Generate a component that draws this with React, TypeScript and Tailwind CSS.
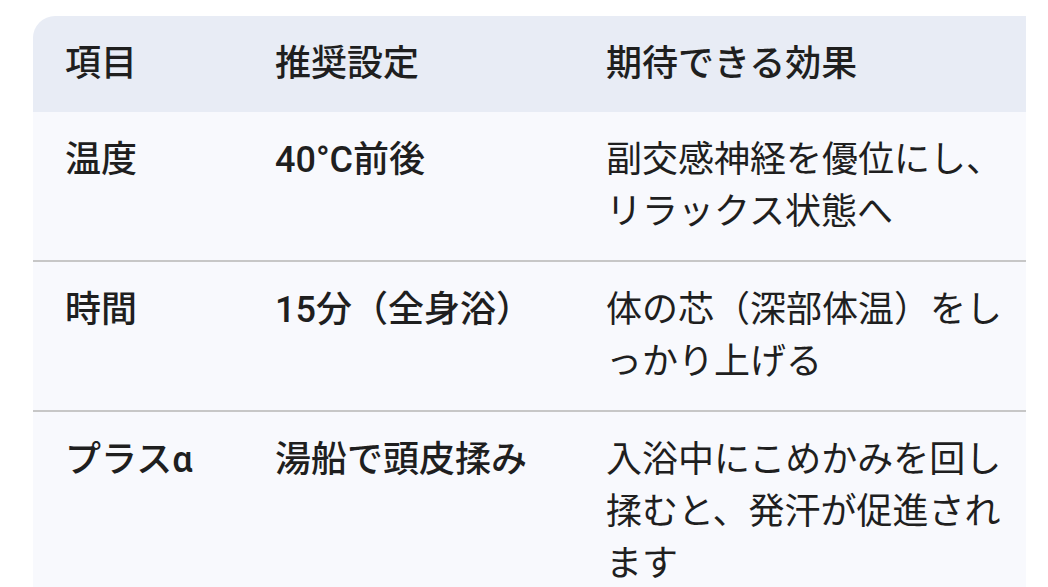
const rows = [
  {
    item: "温度",
    setting: "40°C前後",
    effect: "副交感神経を優位にし、リラックス状態へ",
  },
  {
    item: "時間",
    setting: "15分（全身浴）",
    effect: "体の芯（深部体温）をしっかり上げる",
  },
  {
    item: "プラスα",
    setting: "湯船で頭皮揉み",
    effect: "入浴中にこめかみを回し揉むと、発汗が促進されます",
  },
];

// medium weight: name the Medium faces directly, fall back to regular
const medium =
  "font-['Roboto_Medium','Noto_Sans_CJK_JP_Medium','Roboto','Noto_Sans_CJK_JP',sans-serif] font-normal";

export default function App() {
  return (
    <div className="min-h-screen bg-white pt-4 pl-[33px] font-['Roboto','Noto_Sans_CJK_JP',sans-serif] text-[#1f1f1f]">
      <div className="w-[993px] overflow-hidden rounded-tl-[22px]">
        <table className="w-full table-fixed border-collapse text-left text-[36px] leading-[52px]">
          <colgroup>
            <col className="w-[210px]" />
            <col className="w-[331px]" />
            <col />
          </colgroup>
          <thead className="bg-[#e8ecf5]">
            <tr>
              <th className={`py-[22px] pl-8 ${medium}`}>項目</th>
              <th className={`py-[22px] pl-8 ${medium}`}>推奨設定</th>
              <th className={`py-[22px] pl-8 pr-4 ${medium}`}>期待できる効果</th>
            </tr>
          </thead>
          <tbody className="bg-[#f8f9fd]">
            {rows.map((row) => (
              <tr key={row.item} className="border-b-2 border-[#c7c7c7] align-top">
                <td className={`py-[22px] pl-8 ${medium}`}>{row.item}</td>
                <td className={`py-[22px] pl-8 ${medium}`}>{row.setting}</td>
                <td className="py-[22px] pl-8 pr-4 break-all">{row.effect}</td>
              </tr>
            ))}
          </tbody>
        </table>
      </div>
    </div>
  );
}
